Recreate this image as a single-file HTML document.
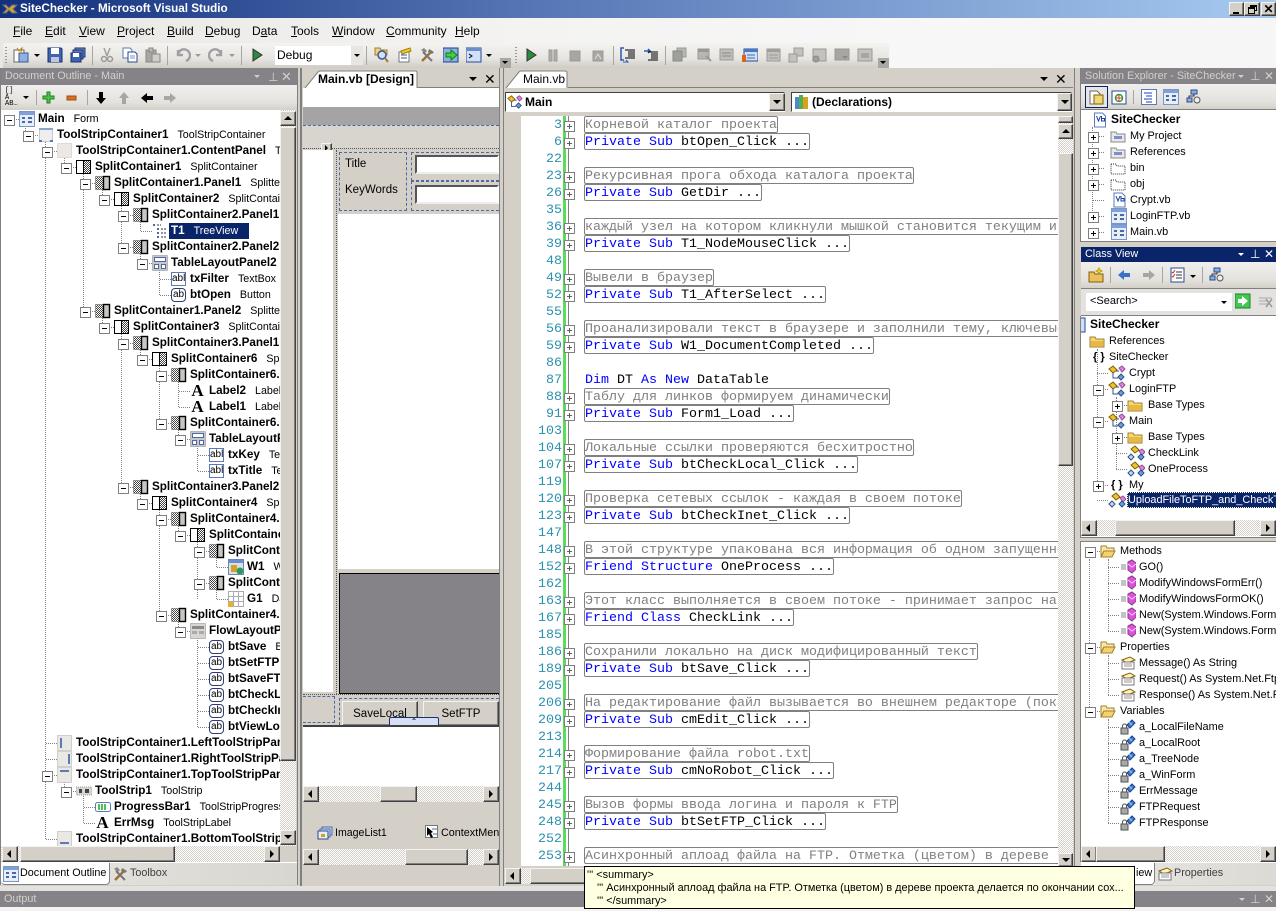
<!DOCTYPE html>
<html><head><meta charset="utf-8"><title>SiteChecker - Microsoft Visual Studio</title>
<style>
html,body{margin:0;padding:0}
body{width:1276px;height:911px;overflow:hidden;position:relative;background:#d4d0c8;font:11px "Liberation Sans",sans-serif;color:#000}
div,span,svg{box-sizing:border-box}
.a{position:absolute;white-space:nowrap}
.b{position:absolute;background:#d4d0c8;border:1px solid;border-color:#f4f3ef #404040 #404040 #f4f3ef;box-shadow:inset -1px -1px #808080}
.d{position:absolute;background:repeating-conic-gradient(#d4d0c8 0 25%,#fff 0 50%) 0 0/2px 2px}
.ti{position:absolute;background:#858387;color:#d4d0c8;font-size:10.8px;line-height:16px;padding-left:4px;white-space:nowrap;overflow:hidden}
.w{position:absolute;background:#fff;overflow:hidden}
.ul,.ur,.uu,.ud{position:absolute;width:0;height:0;border:4px solid transparent}
.ul{border-right-color:#000;border-left-width:0}
.ur{border-left-color:#000;border-right-width:0}
.uu{border-bottom-color:#000;border-top-width:0}
.ud{border-top-color:#000;border-bottom-width:0}
.m{position:absolute;font-size:12px;line-height:14px;top:24px;color:#000}
.m u{text-decoration:underline}
.ic{position:absolute;width:16px;height:16px}
.sep{position:absolute;width:1px;background:#a8a6a0;top:46px;height:19px}
.t{position:relative;height:16px;line-height:16px;white-space:nowrap;font-size:11.7px}
.t b{position:absolute;left:37px;top:0;font-weight:bold}
.t em{font-style:normal;font-weight:normal;font-size:10.7px;margin-left:9px}
.t u,.s u{position:absolute;left:3px;top:4px;width:9px;height:9px;border:1px solid #808080;background:#fff;z-index:2}
u.mi{background:linear-gradient(#000,#000) center/5px 1px no-repeat #fff}
u.pl{background:linear-gradient(#000,#000) center/5px 1px no-repeat,linear-gradient(#000,#000) center/1px 5px no-repeat,#fff}
.t s,.s s{position:absolute;left:7px;top:8px;width:11px;border-top:1px dotted #808080}
.t svg,.s svg{position:absolute;left:18px;top:0;width:16px;height:16px}
.v{position:absolute;border-left:1px dotted #808080;width:1px}
.ab,.abl{position:absolute;left:18px;top:1px;width:15px;height:14px;border:1px solid #5a7ab8;background:#fff;font:10px/12px "Liberation Sans",sans-serif;text-align:center;color:#000}
.ab{border-radius:4px;border-color:#2a3f70}
.A{position:absolute;left:18px;top:-1px;width:15px;font:bold 17px/17px "Liberation Serif",serif;text-align:center}
.l{position:relative;height:17px;font:13.333px/17px "Liberation Mono",monospace;white-space:pre}
.l i{position:absolute;right:496px;top:1px;font-style:normal;color:#2b91af}
.l u{position:absolute;left:60px;top:5px;width:9px;height:9px;border:1px solid #808080;z-index:2;background:linear-gradient(#606060,#606060) center/5px 1px no-repeat,linear-gradient(#606060,#606060) center/1px 5px no-repeat,#fff}
.l span{position:absolute;left:80px;top:0;height:17px;line-height:17px;border:1px solid #808080;border-radius:2px}
.l span.c{color:#808080}
.l .f{position:absolute;left:81px;top:1px}
.l q{quotes:none;color:#00f}
.s{position:absolute;height:16px;margin-top:1px;line-height:16px;white-space:nowrap;font-size:10.9px}
.s svg{left:0}
.s>span{position:absolute}
.s u{top:4px}
.bb{font-size:12px;font-weight:bold;line-height:16px}
.tab{font-size:10.8px}
</style></head>
<body>
<svg width="0" height="0" style="position:absolute"><defs>
<pattern id="dt" width="2" height="2" patternUnits="userSpaceOnUse"><rect width="2" height="2" fill="#fff"/><rect width="1" height="1" fill="#444"/><rect x="1" y="1" width="1" height="1" fill="#444"/></pattern>
<symbol id="sc" viewBox="0 0 16 16"><rect x=".5" y="1.5" width="14" height="13" fill="#fff" stroke="#000"/><rect x="8" y="2" width="6" height="12" fill="url(#dt)"/><path d="M7.5 1v14" stroke="#000"/></symbol>
<symbol id="sp" viewBox="0 0 16 16"><rect x=".5" y="1.5" width="14" height="13" fill="url(#dt)" stroke="#555" stroke-dasharray="1 1"/><rect x="8.5" y="1.5" width="6" height="13" fill="#c8c6c0" stroke="#000" stroke-width="1.4"/></symbol>
<symbol id="fm" viewBox="0 0 16 16"><rect x=".5" y=".5" width="15" height="15" fill="#e8eef8" stroke="#7a96c8"/><rect x="1" y="1" width="14" height="3" fill="#7fa0d8"/><path d="M3 7h3M9 7h4M3 11h3M9 11h4" stroke="#4a6aa5" stroke-width="2"/></symbol>
<symbol id="ts" viewBox="0 0 16 16"><rect x="1.5" y="1.5" width="13" height="13" fill="#eee" stroke="#999" stroke-dasharray="1 1"/><path d="M1 1h14v2H1z" fill="#8aa4d0"/><path d="M1 13h3v2H1zM12 13h3v2h-3z" fill="#5a7ab8"/></symbol>
<symbol id="cp" viewBox="0 0 16 16"><rect x=".5" y=".5" width="14" height="14" fill="#ece9e4" stroke="#c4c2bc" stroke-dasharray="1 1"/></symbol>
<symbol id="tv" viewBox="0 0 16 16"><path d="M1 1h2v2H1zM5 5h2v2H5zM5 9h2v2H5zM5 13h2v2H5z" fill="#4a6aa5"/><path d="M5 2h4M9 6h6M9 10h6M9 14h6" stroke="#333" stroke-dasharray="2 1"/></symbol>
<symbol id="tl" viewBox="0 0 16 16"><rect x=".5" y=".5" width="15" height="15" fill="#c8c6c8" stroke="#888" stroke-dasharray="1 1"/><rect x="2.5" y="2.5" width="11" height="4" fill="#fff" stroke="#4a6aa5"/><rect x="2.5" y="9.5" width="4" height="4" fill="#fff" stroke="#4a6aa5"/><rect x="9.5" y="9.5" width="4" height="4" fill="#fff" stroke="#4a6aa5"/></symbol>
<symbol id="fl" viewBox="0 0 16 16"><rect x=".5" y=".5" width="15" height="15" fill="#d8d6d0" stroke="#888" stroke-dasharray="1 1"/><rect x="2" y="3" width="12" height="3" fill="#8a8a8a"/><rect x="2" y="8" width="5" height="3" fill="#aaa"/><rect x="9" y="8" width="5" height="3" fill="#aaa"/></symbol>
<symbol id="wb" viewBox="0 0 16 16"><rect x=".5" y=".5" width="15" height="15" fill="#d8e0f0" stroke="#6a86b8"/><rect x="1" y="1" width="14" height="3" fill="#6a8ecc"/><rect x="3" y="6" width="6" height="7" fill="#d8a020"/><circle cx="12" cy="12" r="3.5" fill="#2a9a5a"/></symbol>
<symbol id="gd" viewBox="0 0 16 16"><rect x=".5" y=".5" width="15" height="15" fill="#fff" stroke="#aaa"/><path d="M.5 5.5h15M.5 10.5h15M5.5 .5v15M10.5 .5v15" stroke="#aab"/><rect x="0" y="11" width="5" height="5" fill="#e8b030"/></symbol>
<symbol id="lp" viewBox="0 0 16 16"><rect x=".5" y=".5" width="14" height="15" fill="#eae8e2" stroke="#aaa" stroke-dasharray="1 1"/><rect x="3" y="3" width="2" height="10" fill="#5a7ab8"/></symbol>
<symbol id="rp" viewBox="0 0 16 16"><rect x=".5" y=".5" width="14" height="15" fill="#eae8e2" stroke="#aaa" stroke-dasharray="1 1"/><rect x="11" y="3" width="2" height="10" fill="#5a7ab8"/></symbol>
<symbol id="tp" viewBox="0 0 16 16"><rect x=".5" y=".5" width="14" height="15" fill="#eae8e2" stroke="#aaa" stroke-dasharray="1 1"/><rect x="3" y="3" width="9" height="2" fill="#5a7ab8"/></symbol>
<symbol id="bp" viewBox="0 0 16 16"><rect x=".5" y=".5" width="14" height="15" fill="#eae8e2" stroke="#aaa" stroke-dasharray="1 1"/><rect x="3" y="11" width="9" height="2" fill="#5a7ab8"/></symbol>
<symbol id="ts1" viewBox="0 0 16 16"><rect x="0" y="4" width="16" height="8" fill="#d8d6d0" stroke="#999" stroke-dasharray="1 1"/><path d="M3 6h3v4H3zM9 6h4v4H9z" fill="#444"/></symbol>
<symbol id="pb" viewBox="0 0 16 16"><rect x=".5" y="3.5" width="15" height="9" rx="2" fill="#fff" stroke="#5a7ab8"/><path d="M3 5h2v6H3zM6 5h2v6H6zM9 5h2v6H9z" fill="#50c050"/></symbol>
<symbol id="fd" viewBox="0 0 16 16"><path d="M1 4h5l1 2h8v8H1z" fill="#f6d878" stroke="#a08030"/><rect x="2" y="8" width="12" height="5" fill="#e8b840"/></symbol>
<symbol id="fo" viewBox="0 0 16 16"><path d="M1 3h5l1 2h7v3H4l-3 6z" fill="#fbe8a8" stroke="#a08030"/><path d="M4 8h11l-3 6H1z" fill="#f6d070" stroke="#a08030"/></symbol>
<symbol id="fg" viewBox="0 0 16 16"><path d="M1 4h5l1 2h8v8H1z" fill="#e8e8e8" stroke="#888"/><path d="M4 8h8v3H4z" fill="#7a90c8"/></symbol>
<symbol id="fw" viewBox="0 0 16 16"><path d="M1 4h5l1 2h8v8H1z" fill="#fff" stroke="#333" stroke-dasharray="1 1"/></symbol>
<symbol id="cl" viewBox="0 0 18 16"><path d="M1 4l4-3 4 4-4 3z" fill="#f0c030" stroke="#806000"/><path d="M11 3l3-2 3 3-3 3z" fill="#e080e0" stroke="#905090"/><path d="M10 12l3-3 3 3-3 3z" fill="#60a0e0" stroke="#305080"/><path d="M5 8v5h5M8 6h3" stroke="#3050a0" fill="none"/></symbol>
<symbol id="cp2" viewBox="0 0 18 16"><path d="M4 4l4-3 4 4-4 3z" fill="#f0c030" stroke="#806000"/><path d="M12 6l3-2 3 3-3 3z" fill="#e080e0" stroke="#905090"/><path d="M1 12l3-3 3 3-3 3z" fill="#c0d8f4" stroke="#305080"/><path d="M11 12l3-3 3 3-3 3z" fill="#60a0e0" stroke="#305080"/></symbol>
<symbol id="me" viewBox="0 0 16 16"><path d="M1 6h5M1 8h5M1 10h5" stroke="#888"/><path d="M8 3l4-2 4 3v6l-4 4-4-3z" fill="#e050e0" stroke="#804080"/><path d="M8 5l4 3 4-3" stroke="#fbd0fb" fill="none"/></symbol>
<symbol id="pr" viewBox="0 0 16 16"><path d="M2 5l8-3 5 3-8 3z" fill="#fff0c0" stroke="#806000"/><rect x="2" y="7" width="12" height="7" fill="#fff" stroke="#777"/><path d="M4 9h8M4 11h8" stroke="#999"/></symbol>
<symbol id="vr" viewBox="0 0 16 16"><path d="M7 6l5-5 3 3-5 5z" fill="#3a80d8" stroke="#1a4080"/><path d="M9 3l3 3" stroke="#a8d0f8"/><rect x="1" y="9" width="7" height="6" fill="#a8a8a8" stroke="#555"/><path d="M2.5 9V7a2 2 0 014 0v2" fill="none" stroke="#555"/></symbol>
<symbol id="vb" viewBox="0 0 16 16"><path d="M3 1h8l3 3v11H3z" fill="#fff" stroke="#5a7ab8"/><path d="M5 4l2 5 2-5M10 4v5h3V6.5h-3" stroke="#1a3fa0" fill="none"/></symbol>
</defs></svg>

<!-- title bar -->
<div class="a" style="left:0;top:0;width:1276px;height:18px;background:linear-gradient(90deg,#12307c,#5373b3 40%,#a6caf0 100%)"></div>
<svg class="a" style="left:2px;top:2px" width="16" height="14"><path d="M1 3l4 4-4 4h3l3-3 3 3h5l-4-4 4-4h-5l-3 3-3-3z" fill="#e0a030" stroke="#5a7080"/></svg>
<div class="a" style="left:20px;top:0;line-height:18px;font-size:11.7px;font-weight:bold;color:#fff">SiteChecker - Microsoft Visual Studio</div>
<div class="b" style="left:1229px;top:2px;width:15px;height:14px"><div class="a" style="left:3px;top:9px;width:6px;height:2px;background:#000"></div></div>
<div class="b" style="left:1244px;top:2px;width:16px;height:14px"><div class="a" style="left:5px;top:2px;width:7px;height:6px;border:1px solid #000;border-top-width:2px"></div><div class="a" style="left:3px;top:4px;width:7px;height:7px;border:1px solid #000;border-top-width:2px;background:#d4d0c8"></div></div>
<div class="b" style="left:1261px;top:2px;width:15px;height:14px;font:bold 12px/12px 'Liberation Sans',sans-serif;text-align:center">✕</div>

<!-- menu -->
<div class="a" style="left:0;top:18px;width:1276px;height:50px;background:linear-gradient(90deg,#e8e7e4,#f3f2f0 35%,#f7f7f7 70%,#f6f6f6)"></div>
<div class="m" style="left:13px"><u>F</u>ile</div>
<div class="m" style="left:45px"><u>E</u>dit</div>
<div class="m" style="left:79px"><u>V</u>iew</div>
<div class="m" style="left:117px"><u>P</u>roject</div>
<div class="m" style="left:167px"><u>B</u>uild</div>
<div class="m" style="left:205px"><u>D</u>ebug</div>
<div class="m" style="left:252px">D<u>a</u>ta</div>
<div class="m" style="left:291px"><u>T</u>ools</div>
<div class="m" style="left:332px"><u>W</u>indow</div>
<div class="m" style="left:386px"><u>C</u>ommunity</div>
<div class="m" style="left:455px"><u>H</u>elp</div>

<!-- toolbars -->
<div class="a" style="left:3px;top:43px;width:508px;height:25px;border-radius:3px 3px 0 0;background:linear-gradient(#f4f3f1,#e8e6e2 60%,#cfccc5)"></div>
<div class="a" style="left:511px;top:43px;width:378px;height:25px;border-radius:3px 3px 0 0;background:linear-gradient(#f4f3f1,#e8e6e2 60%,#cfccc5)"></div>
<div class="a" style="left:5px;top:47px;width:2px;height:17px;background:repeating-linear-gradient(#999 0 1px,transparent 1px 3px)"></div>
<div class="a" style="left:515px;top:47px;width:2px;height:17px;background:repeating-linear-gradient(#999 0 1px,transparent 1px 3px)"></div>
<svg class="ic" style="left:13px;top:47px"><path d="M1 3h10v12H1z" fill="#fff" stroke="#666"/><path d="M4 1l2 3 3-3-1 4" fill="#f0c830" stroke="#c08000"/><rect x="6" y="6" width="9" height="9" fill="#8fb0e0" stroke="#3a5a90"/></svg>
<div class="ud" style="left:34px;top:54px;border-width:3px;border-bottom-width:0"></div>
<svg class="ic" style="left:47px;top:47px"><path d="M1 1h13l1 1v13H1z" fill="#3e64b0" stroke="#1a3070"/><rect x="4" y="1" width="8" height="6" fill="#fff"/><rect x="4" y="10" width="8" height="5" fill="#c0c8d8"/></svg>
<svg class="ic" style="left:70px;top:47px"><path d="M5 1h10v9H5z" fill="#7a90c8" stroke="#1a3070"/><path d="M3 3h10v9H3z" fill="#5a78c0" stroke="#1a3070"/><path d="M1 6h10v9H1z" fill="#3e64b0" stroke="#1a3070"/><rect x="3" y="6" width="6" height="4" fill="#fff"/></svg>
<div class="sep" style="left:92px"></div>
<svg class="ic" style="left:99px;top:47px"><path d="M5 1l3 8M11 1L8 9" stroke="#a0a0a0" stroke-width="1.5"/><circle cx="5" cy="12" r="2.5" fill="none" stroke="#999" stroke-width="1.5"/><circle cx="11" cy="12" r="2.5" fill="none" stroke="#999" stroke-width="1.5"/></svg>
<svg class="ic" style="left:122px;top:47px"><path d="M1 1h7l2 2v8H1z" fill="#fff" stroke="#5a7ab8"/><path d="M6 5h7l2 2v8H6z" fill="#fff" stroke="#2a4a90"/><path d="M8 9h5M8 11h5" stroke="#7a96c8"/></svg>
<svg class="ic" style="left:145px;top:47px"><rect x="1" y="3" width="10" height="12" fill="#a8a6a0" stroke="#888"/><rect x="4" y="1" width="4" height="4" fill="#bbb" stroke="#888"/><rect x="7" y="7" width="8" height="8" fill="#d0cec8" stroke="#888"/></svg>
<div class="sep" style="left:167px"></div>
<svg class="ic" style="left:175px;top:47px"><path d="M3 3v5h5M3 8a6 6 0 118 6" fill="none" stroke="#a0a0a0" stroke-width="2.4"/></svg>
<div class="ud" style="left:195px;top:54px;border-width:3px;border-bottom-width:0;border-top-color:#999"></div>
<svg class="ic" style="left:208px;top:47px"><path d="M13 3v5H8M13 8a6 6 0 10-8 6" fill="none" stroke="#a0a0a0" stroke-width="2.4"/></svg>
<div class="ud" style="left:229px;top:54px;border-width:3px;border-bottom-width:0;border-top-color:#999"></div>
<div class="sep" style="left:241px"></div>
<svg class="ic" style="left:250px;top:47px"><path d="M3 2l9 6-9 6z" fill="#2c8a3c" stroke="#333"/></svg>
<div class="a" style="left:275px;top:46px;width:88px;height:19px;background:#fff;font-size:12px;line-height:19px;padding-left:2px">Debug</div>
<div class="a" style="left:351px;top:46px;width:12px;height:19px;background:#e8e6e2"></div>
<div class="ud" style="left:354px;top:54px;border-width:3px;border-bottom-width:0"></div>
<div class="sep" style="left:366px"></div>
<svg class="ic" style="left:373px;top:47px"><path d="M2 1h5l1 2h6v5H2z" fill="#f0d080" stroke="#a08030"/><circle cx="9" cy="8" r="4" fill="#cfe0f8" stroke="#3a5a90" stroke-width="1.5"/><path d="M12 11l3 4" stroke="#a08030" stroke-width="2"/></svg>
<svg class="ic" style="left:396px;top:47px"><path d="M3 5h10v10H3z" fill="#fff" stroke="#777"/><path d="M5 8h6M5 11h6" stroke="#3a5a90"/><path d="M5 4l9-3 1 3-9 3z" fill="#f0c830" stroke="#a08000"/></svg>
<svg class="ic" style="left:419px;top:47px"><path d="M3 14L13 4" stroke="#a07030" stroke-width="2.5"/><path d="M2 3l3-2 3 3-2 2z" fill="#888"/><path d="M13 14L4 5" stroke="#777" stroke-width="2"/><path d="M10 2l5 3-2 2-4-2z" fill="#777"/></svg>
<svg class="ic" style="left:443px;top:47px"><rect x="0" y="1" width="15" height="14" fill="#8ab0e0" stroke="#1a3f90"/><path d="M3 6h5V3l6 5-6 5v-3H3z" fill="#40d040" stroke="#108010"/></svg>
<svg class="ic" style="left:466px;top:47px"><rect x="0" y="1" width="15" height="14" fill="#cfe0f8" stroke="#2a4a90"/><rect x="0" y="1" width="15" height="3" fill="#6a8ecc"/><path d="M3 7l3 2-3 2" fill="none" stroke="#000"/></svg>
<div class="ud" style="left:486px;top:54px;border-width:3px;border-bottom-width:0"></div>
<div class="a" style="left:500px;top:58px;width:11px;height:10px;background:#aaa8a2"></div>
<div class="ud" style="left:502px;top:61px;border-width:3px;border-bottom-width:0"></div>
<svg class="ic" style="left:523px;top:47px"><path d="M4 2l9 6-9 6z" fill="#2c8a3c" stroke="#333"/></svg>
<svg class="ic" style="left:545px;top:47px"><path d="M4 3h3v11H4zM9 3h3v11H9z" fill="#b0aea8" stroke="#999"/></svg>
<svg class="ic" style="left:567px;top:47px"><rect x="3" y="4" width="10" height="10" fill="#a8a6a0" stroke="#999"/></svg>
<svg class="ic" style="left:590px;top:47px"><rect x="3" y="4" width="10" height="10" fill="#a8a6a0" stroke="#999"/><path d="M5 12l3-5 3 5" fill="none" stroke="#ddd"/></svg>
<div class="sep" style="left:613px"></div>
<svg class="ic" style="left:620px;top:47px"><path d="M4 1H1v12h3" fill="none" stroke="#2a5ab0" stroke-width="1.5"/><path d="M5 3h10M8 5h7M8 7h7M8 9h7M5 11h10" stroke="#000"/><path d="M3 15h5l-2-2" fill="none" stroke="#2a5ab0"/></svg>
<svg class="ic" style="left:643px;top:47px"><path d="M1 4h6l-2-2M5 6L7 4" fill="none" stroke="#2a5ab0" stroke-width="1.5"/><path d="M5 5h10M8 7h7M8 9h7M8 11h7M5 13h10" stroke="#000"/></svg>
<div class="sep" style="left:665px"></div>
<svg class="ic" style="left:672px;top:47px"><rect x="5" y="1" width="9" height="9" fill="#b8b6b0" stroke="#999"/><rect x="1" y="4" width="9" height="10" fill="#a0a09a" stroke="#888"/></svg>
<svg class="ic" style="left:696px;top:47px"><rect x="2" y="2" width="11" height="10" fill="#b8b6b0" stroke="#999"/><rect x="2" y="2" width="11" height="3" fill="#9a9a94"/><path d="M10 9l5 5" stroke="#999" stroke-width="2"/></svg>
<svg class="ic" style="left:718px;top:47px"><rect x="2" y="2" width="13" height="11" fill="#c0beb8" stroke="#999"/><path d="M4 6h9M4 9h9" stroke="#888"/></svg>
<svg class="ic" style="left:742px;top:47px"><rect x="2" y="2" width="14" height="12" fill="#cfe0f8" stroke="#2a4a90"/><rect x="2" y="2" width="14" height="3" fill="#4a78c8"/><path d="M5 8h8M5 11h8" stroke="#4a6aa5"/><rect x="0" y="8" width="4" height="7" fill="#e06020"/></svg>
<svg class="ic" style="left:765px;top:47px"><rect x="2" y="2" width="13" height="12" fill="#c4c2bc" stroke="#999"/><rect x="2" y="2" width="13" height="3" fill="#a0a09a"/><path d="M4 8h9M4 11h9" stroke="#999"/></svg>
<svg class="ic" style="left:788px;top:47px"><rect x="6" y="1" width="9" height="8" fill="#c4c2bc" stroke="#999"/><rect x="1" y="7" width="8" height="8" fill="#c4c2bc" stroke="#999"/></svg>
<svg class="ic" style="left:811px;top:47px"><rect x="2" y="2" width="13" height="12" fill="#c4c2bc" stroke="#999"/><circle cx="5" cy="12" r="3" fill="#a0a09a" stroke="#888"/></svg>
<svg class="ic" style="left:834px;top:47px"><rect x="1" y="2" width="14" height="11" fill="#a8a6a0" stroke="#999"/><path d="M8 9l3 3 3-3z" fill="#888"/></svg>
<svg class="ic" style="left:857px;top:47px"><rect x="1" y="2" width="14" height="12" fill="#c4c2bc" stroke="#999"/><rect x="4" y="6" width="8" height="5" fill="#a8a6a0"/></svg>
<div class="a" style="left:878px;top:58px;width:11px;height:10px;background:#aaa8a2"></div>
<div class="ud" style="left:880px;top:61px;border-width:3px;border-bottom-width:0"></div>

<!-- LEFT: Document Outline -->
<div class="a" style="left:0;top:68px;width:298px;height:817px;border-left:1px solid #808080;border-right:1px solid #808080"></div>
<div class="ti" style="left:1px;top:68px;width:296px;height:17px">Document Outline - Main</div>
<div class="ud" style="left:254px;top:75px;border-width:3px;border-bottom-width:0;border-top-color:#d4d0c8"></div>
<div class="a" style="left:268px;top:69px;color:#d4d0c8;font-size:12px;line-height:16px">⊥</div>
<div class="a" style="left:281px;top:69px;color:#d4d0c8;font-size:13px;line-height:16px">✕</div>
<div class="a" style="left:1px;top:85px;width:296px;height:25px;background:linear-gradient(#f0efed,#e4e2de 70%,#d4d0c8)"></div>
<div class="a" style="left:5px;top:88px;font:7px/6.5px 'Liberation Mono',monospace;white-space:pre">[]
A
AB…</div>
<div class="ud" style="left:23px;top:96px;border-width:3px;border-bottom-width:0"></div>
<div class="sep" style="left:36px;top:90px;height:15px"></div>
<svg class="ic" style="left:41px;top:90px"><path d="M6 2h3v4h4v3H9v4H6V9H2V6h4z" fill="#50c050" stroke="#208020"/></svg>
<svg class="ic" style="left:64px;top:90px"><rect x="3" y="6" width="9" height="4" fill="#d87020" stroke="#a05010"/></svg>
<div class="sep" style="left:87px;top:90px;height:15px"></div>
<svg class="ic" style="left:93px;top:90px"><path d="M6 2h4v6h3l-5 6-5-6h3z" fill="#000"/></svg>
<svg class="ic" style="left:116px;top:90px"><path d="M6 14h4V8h3L8 2 3 8h3z" fill="#a8a6a0"/></svg>
<svg class="ic" style="left:139px;top:90px"><path d="M14 6v4H8v3L2 8l6-5v3z" fill="#000"/></svg>
<svg class="ic" style="left:162px;top:90px"><path d="M2 6v4h6v3l6-5-6-5v3z" fill="#a8a6a0"/></svg>

<div class="w" style="left:1px;top:110px;width:279px;height:736px">
<div class="a" style="left:0;top:1px;width:279px;height:736px">
<div class="v" style="left:24px;top:8px;height:16px"></div>
<div class="v" style="left:44px;top:24px;height:704px"></div>
<div class="v" style="left:63px;top:40px;height:16px"></div><div class="v" style="left:63px;top:664px;height:16px"></div>
<div class="v" style="left:82px;top:56px;height:144px"></div><div class="v" style="left:82px;top:680px;height:32px"></div>
<div class="v" style="left:101px;top:72px;height:16px"></div><div class="v" style="left:101px;top:200px;height:16px"></div>
<div class="v" style="left:120px;top:88px;height:48px"></div><div class="v" style="left:120px;top:216px;height:160px"></div>
<div class="v" style="left:139px;top:104px;height:16px"></div><div class="v" style="left:139px;top:136px;height:16px"></div><div class="v" style="left:139px;top:232px;height:16px"></div><div class="v" style="left:139px;top:376px;height:16px"></div>
<div class="v" style="left:158px;top:152px;height:32px"></div><div class="v" style="left:158px;top:248px;height:64px"></div><div class="v" style="left:158px;top:392px;height:112px"></div>
<div class="v" style="left:177px;top:264px;height:32px"></div><div class="v" style="left:177px;top:312px;height:16px"></div><div class="v" style="left:177px;top:408px;height:16px"></div><div class="v" style="left:177px;top:504px;height:16px"></div>
<div class="v" style="left:196px;top:328px;height:32px"></div><div class="v" style="left:196px;top:424px;height:64px"></div><div class="v" style="left:196px;top:520px;height:96px"></div>
<div class="v" style="left:215px;top:440px;height:16px"></div><div class="v" style="left:215px;top:472px;height:16px"></div>
</div>
<div class="a" style="left:0;top:1px;width:279px">
<div class="t" style="margin-left:0"><u class="mi"></u><s></s><svg><use href="#fm"/></svg><b>Main<em>Form</em></b></div>
<div class="t" style="margin-left:19px"><u class="mi"></u><s></s><svg><use href="#ts"/></svg><b>ToolStripContainer1<em>ToolStripContainer</em></b></div>
<div class="t" style="margin-left:38px"><u class="mi"></u><s></s><svg><use href="#cp"/></svg><b>ToolStripContainer1.ContentPanel<em>ToolStripContentPanel</em></b></div>
<div class="t" style="margin-left:57px"><u class="mi"></u><s></s><svg><use href="#sc"/></svg><b>SplitContainer1<em>SplitContainer</em></b></div>
<div class="t" style="margin-left:76px"><u class="mi"></u><s></s><svg><use href="#sp"/></svg><b>SplitContainer1.Panel1<em>SplitterPanel</em></b></div>
<div class="t" style="margin-left:95px"><u class="mi"></u><s></s><svg><use href="#sc"/></svg><b>SplitContainer2<em>SplitContainer</em></b></div>
<div class="t" style="margin-left:114px"><u class="mi"></u><s></s><svg><use href="#sp"/></svg><b>SplitContainer2.Panel1</b></div>
<div class="t" style="margin-left:133px"><s></s><svg><use href="#tv"/></svg><div class="a" style="left:35px;top:0;width:80px;height:16px;background:#0a246a"></div><b style="color:#fff">T1<em>TreeView</em></b></div>
<div class="t" style="margin-left:114px"><u class="mi"></u><s></s><svg><use href="#sp"/></svg><b>SplitContainer2.Panel2</b></div>
<div class="t" style="margin-left:133px"><u class="mi"></u><s></s><svg><use href="#tl"/></svg><b>TableLayoutPanel2</b></div>
<div class="t" style="margin-left:152px"><s></s><span class="abl">abl</span><b>txFilter<em>TextBox</em></b></div>
<div class="t" style="margin-left:152px"><s></s><span class="ab">ab</span><b>btOpen<em>Button</em></b></div>
<div class="t" style="margin-left:76px"><u class="mi"></u><s></s><svg><use href="#sp"/></svg><b>SplitContainer1.Panel2<em>SplitterPanel</em></b></div>
<div class="t" style="margin-left:95px"><u class="mi"></u><s></s><svg><use href="#sc"/></svg><b>SplitContainer3<em>SplitContainer</em></b></div>
<div class="t" style="margin-left:114px"><u class="mi"></u><s></s><svg><use href="#sp"/></svg><b>SplitContainer3.Panel1</b></div>
<div class="t" style="margin-left:133px"><u class="mi"></u><s></s><svg><use href="#sc"/></svg><b>SplitContainer6<em>SplitContainer</em></b></div>
<div class="t" style="margin-left:152px"><u class="mi"></u><s></s><svg><use href="#sp"/></svg><b>SplitContainer6.Panel1</b></div>
<div class="t" style="margin-left:171px"><s></s><span class="A">A</span><b>Label2<em>Label</em></b></div>
<div class="t" style="margin-left:171px"><s></s><span class="A">A</span><b>Label1<em>Label</em></b></div>
<div class="t" style="margin-left:152px"><u class="mi"></u><s></s><svg><use href="#sp"/></svg><b>SplitContainer6.Panel2</b></div>
<div class="t" style="margin-left:171px"><u class="mi"></u><s></s><svg><use href="#tl"/></svg><b>TableLayoutPanel1</b></div>
<div class="t" style="margin-left:190px"><s></s><span class="abl">abl</span><b>txKey<em>TextBox</em></b></div>
<div class="t" style="margin-left:190px"><s></s><span class="abl">abl</span><b>txTitle<em>TextBox</em></b></div>
<div class="t" style="margin-left:114px"><u class="mi"></u><s></s><svg><use href="#sp"/></svg><b>SplitContainer3.Panel2</b></div>
<div class="t" style="margin-left:133px"><u class="mi"></u><s></s><svg><use href="#sc"/></svg><b>SplitContainer4<em>SplitContainer</em></b></div>
<div class="t" style="margin-left:152px"><u class="mi"></u><s></s><svg><use href="#sp"/></svg><b>SplitContainer4.Panel1</b></div>
<div class="t" style="margin-left:171px"><u class="mi"></u><s></s><svg><use href="#sc"/></svg><b>SplitContainer5</b></div>
<div class="t" style="margin-left:190px"><u class="mi"></u><s></s><svg><use href="#sp"/></svg><b>SplitContainer5.Panel1</b></div>
<div class="t" style="margin-left:209px"><s></s><svg><use href="#wb"/></svg><b>W1<em>WebBrowser</em></b></div>
<div class="t" style="margin-left:190px"><u class="mi"></u><s></s><svg><use href="#sp"/></svg><b>SplitContainer5.Panel2</b></div>
<div class="t" style="margin-left:209px"><s></s><svg><use href="#gd"/></svg><b>G1<em>DataGridView</em></b></div>
<div class="t" style="margin-left:152px"><u class="mi"></u><s></s><svg><use href="#sp"/></svg><b>SplitContainer4.Panel2</b></div>
<div class="t" style="margin-left:171px"><u class="mi"></u><s></s><svg><use href="#fl"/></svg><b>FlowLayoutPanel1</b></div>
<div class="t" style="margin-left:190px"><s></s><span class="ab">ab</span><b>btSave<em>Button</em></b></div>
<div class="t" style="margin-left:190px"><s></s><span class="ab">ab</span><b>btSetFTP<em>Button</em></b></div>
<div class="t" style="margin-left:190px"><s></s><span class="ab">ab</span><b>btSaveFTP<em>Button</em></b></div>
<div class="t" style="margin-left:190px"><s></s><span class="ab">ab</span><b>btCheckLocal</b></div>
<div class="t" style="margin-left:190px"><s></s><span class="ab">ab</span><b>btCheckInet</b></div>
<div class="t" style="margin-left:190px"><s></s><span class="ab">ab</span><b>btViewLocal</b></div>
<div class="t" style="margin-left:38px"><s></s><svg><use href="#lp"/></svg><b>ToolStripContainer1.LeftToolStripPanel</b></div>
<div class="t" style="margin-left:38px"><s></s><svg><use href="#rp"/></svg><b>ToolStripContainer1.RightToolStripPanel</b></div>
<div class="t" style="margin-left:38px"><u class="mi"></u><s></s><svg><use href="#tp"/></svg><b>ToolStripContainer1.TopToolStripPanel</b></div>
<div class="t" style="margin-left:57px"><u class="mi"></u><s></s><svg><use href="#ts1"/></svg><b>ToolStrip1<em>ToolStrip</em></b></div>
<div class="t" style="margin-left:76px"><s></s><svg><use href="#pb"/></svg><b>ProgressBar1<em>ToolStripProgressBar</em></b></div>
<div class="t" style="margin-left:76px"><s></s><span class="A">A</span><b>ErrMsg<em>ToolStripLabel</em></b></div>
<div class="t" style="margin-left:38px"><s></s><svg><use href="#bp"/></svg><b>ToolStripContainer1.BottomToolStripPanel</b></div>
</div></div>

<div class="d" style="left:280px;top:110px;width:16px;height:736px"></div>
<div class="b" style="left:280px;top:111px;width:16px;height:15px"><div class="uu" style="left:3px;top:4px"></div></div>
<div class="b" style="left:280px;top:127px;width:16px;height:634px"></div>
<div class="b" style="left:280px;top:830px;width:16px;height:15px"><div class="ud" style="left:3px;top:4px"></div></div>
<div class="d" style="left:1px;top:846px;width:279px;height:16px"></div>
<div class="b" style="left:2px;top:846px;width:16px;height:16px"><div class="ul" style="left:4px;top:3px"></div></div>
<div class="b" style="left:20px;top:846px;width:155px;height:16px"></div>
<div class="b" style="left:264px;top:846px;width:16px;height:16px"><div class="ur" style="left:5px;top:3px"></div></div>
<div class="a" style="left:1px;top:862px;width:296px;height:1px;background:#fff"></div>
<div class="a" style="left:1px;top:863px;width:296px;height:22px;background:linear-gradient(90deg,#e8e6e2,#d8d6d0)"></div>
<div class="a tab" style="left:1px;top:863px;width:109px;height:22px;background:#fff;border-right:1px solid #808080;border-bottom:1px solid #808080;border-radius:0 0 4px 4px;line-height:21px;padding-left:19px">Document Outline</div>
<svg class="ic" style="left:3px;top:866px"><use href="#fm"/></svg>
<svg class="ic" style="left:112px;top:866px"><path d="M3 14L13 4" stroke="#a07030" stroke-width="2.5"/><path d="M2 3l3-2 3 3-2 2z" fill="#888"/><path d="M13 14L4 5" stroke="#777" stroke-width="2"/><path d="M10 2l5 3-2 2-4-2z" fill="#777"/></svg>
<div class="a tab" style="left:130px;top:863px;line-height:21px;color:#404040">Toolbox</div>

<!-- DESIGN panel -->
<div class="a" style="left:300px;top:68px;width:200px;height:818px;border-left:2px solid #808080;border-right:1px solid #808080"></div>
<svg class="a" style="left:304px;top:70px" width="116" height="19"><path d="M1 18L14 2q1-1 2-1h95q2 0 2 2v15" fill="#fff" stroke="#808080"/></svg>
<div class="a" style="left:318px;top:71px;font-size:12px;font-weight:bold;line-height:16px">Main.vb [Design]</div>
<div class="a" style="left:417px;top:87px;width:82px;height:1px;background:#808080"></div>
<div class="ud" style="left:469px;top:77px;border-width:4px;border-bottom-width:0"></div>
<div class="a" style="left:484px;top:71px;font-size:14px;line-height:16px">✕</div>
<div class="a" style="left:303px;top:88px;width:196px;height:19px;background:#fff"></div>
<div class="a" style="left:303px;top:107px;width:196px;height:18px;background:#a5a3a3"></div>
<div class="a" style="left:303px;top:125px;width:196px;height:23px;background:#d8d5cf;border-top:1px dashed #4a6aa5"></div>
<div class="a" style="left:303px;top:148px;width:196px;border-top:1px dotted #555"></div>
<div class="b" style="left:321px;top:143px;width:11px;height:10px"><div class="ur" style="left:3px;top:1px;border-width:3px;border-right-width:0"></div></div>
<div class="a" style="left:303px;top:150px;width:32px;height:542px;background:#fff;border-right:2px solid #d4d0c8"></div>
<div class="a" style="left:336px;top:150px;height:544px;border-left:1px dotted #555"></div>
<div class="a" style="left:339px;top:152px;width:68px;height:59px;background:#d4d0c8;border:1px dashed #4a6aa5"></div>
<div class="a" style="left:345px;top:157px;font-size:11.5px;line-height:15px">Title</div>
<div class="a" style="left:345px;top:183px;font-size:11.5px;line-height:15px">KeyWords</div>
<div class="a" style="left:411px;top:152px;width:88px;height:29px;background:#d4d0c8;border:1px dashed #4a6aa5;border-right:0"></div>
<div class="a" style="left:411px;top:181px;width:88px;height:30px;background:#d4d0c8;border:1px dashed #4a6aa5;border-right:0"></div>
<div class="a" style="left:415px;top:155px;width:84px;height:19px;background:#fff;border:2px solid;border-color:#555 #fff #eee #555"></div>
<div class="a" style="left:415px;top:185px;width:84px;height:19px;background:#fff;border:2px solid;border-color:#555 #fff #eee #555"></div>
<div class="a" style="left:338px;top:214px;width:161px;height:355px;background:#fff"></div>
<div class="a" style="left:338px;top:569px;width:161px;height:4px;background:#d4d0c8"></div>
<div class="a" style="left:339px;top:573px;width:160px;height:121px;background:#858387;border-top:1px solid #000;border-bottom:1px solid #000;border-left:1px solid #000"></div>
<div class="a" style="left:303px;top:694px;width:196px;height:31px;background:#d4d0c8"></div>
<div class="a" style="left:303px;top:694px;width:196px;border-top:1px dotted #555"></div>
<div class="a" style="left:303px;top:696px;width:32px;height:27px;border-top:1px dashed #4a6aa5;border-right:1px dashed #4a6aa5;border-bottom:1px dashed #4a6aa5"></div>
<div class="a" style="left:339px;top:698px;width:160px;border-top:1px dashed #4a6aa5"></div>
<div class="a" style="left:339px;top:698px;height:27px;border-left:1px dashed #4a6aa5"></div>
<div class="b" style="left:342px;top:701px;width:76px;height:24px;font-size:11.5px;line-height:24px;text-align:center;border-bottom:0">SaveLocal</div>
<div class="b" style="left:423px;top:701px;width:76px;height:24px;font-size:11.5px;line-height:24px;text-align:center;border-bottom:0">SetFTP</div>
<div class="a" style="left:389px;top:717px;width:50px;height:8px;background:#d6dff5;border:1px solid #1a3070;border-bottom:0;border-radius:2px 2px 0 0;font:8px/8px 'Liberation Sans',sans-serif;text-align:center">⌃</div>
<div class="a" style="left:303px;top:725px;width:196px;height:2px;background:#404040"></div>
<div class="a" style="left:303px;top:727px;width:196px;height:59px;background:#fff"></div>
<div class="d" style="left:303px;top:786px;width:196px;height:16px"></div>
<div class="b" style="left:303px;top:786px;width:16px;height:16px"><div class="ul" style="left:4px;top:3px"></div></div>
<div class="b" style="left:380px;top:786px;width:37px;height:16px"></div>
<div class="b" style="left:483px;top:786px;width:16px;height:16px"><div class="ur" style="left:5px;top:3px"></div></div>
<svg class="ic" style="left:317px;top:825px"><rect x="5" y="2" width="10" height="8" fill="#cfe0f8" stroke="#4a6aa5"/><rect x="3" y="4" width="10" height="8" fill="#cfe0f8" stroke="#4a6aa5"/><rect x="1" y="6" width="10" height="8" fill="#e8eef8" stroke="#2a4a90"/><rect x="4" y="9" width="4" height="3" fill="#d8a020"/></svg>
<div class="a" style="left:335px;top:825px;font-size:10.6px;line-height:16px">ImageList1</div>
<svg class="ic" style="left:425px;top:825px"><rect x=".5" y=".5" width="12" height="12" fill="#fff" stroke="#777"/><path d="M2 2l6 5-2 1 2 4-2 1-2-4-2 2z" fill="#000"/><path d="M7 4h5M8 9h4" stroke="#4a6aa5"/></svg>
<div class="a" style="left:441px;top:825px;width:58px;overflow:hidden;font-size:10.8px;line-height:16px">ContextMenuStrip1</div>
<div class="d" style="left:303px;top:849px;width:196px;height:16px"></div>
<div class="b" style="left:303px;top:849px;width:16px;height:16px"><div class="ul" style="left:4px;top:3px"></div></div>
<div class="b" style="left:405px;top:849px;width:63px;height:16px"></div>
<div class="b" style="left:483px;top:849px;width:16px;height:16px"><div class="ur" style="left:5px;top:3px"></div></div>
<div class="a" style="left:300px;top:886px;width:204px;height:1px;background:#808080"></div>

<!-- CODE panel -->
<div class="a" style="left:503px;top:68px;width:572px;height:819px;border-left:1px solid #808080;border-right:1px solid #808080;border-bottom:1px solid #808080"></div>
<svg class="a" style="left:505px;top:70px" width="64" height="19"><path d="M1 18L14 2q1-1 2-1h44q2 0 2 2v15" fill="#fff" stroke="#808080"/></svg>
<div class="a" style="left:523px;top:71px;font-size:12px;line-height:16px">Main.vb</div>
<div class="a" style="left:568px;top:87px;width:505px;height:1px;background:#808080"></div>
<div class="ud" style="left:1040px;top:77px;border-width:4px;border-bottom-width:0"></div>
<div class="a" style="left:1055px;top:71px;font-size:14px;line-height:16px">✕</div>
<div class="a" style="left:505px;top:92px;width:280px;height:20px;background:#fff;border:1px solid;border-color:#404040 #fff #fff #404040;font-size:12px;font-weight:bold;line-height:18px;padding-left:19px">Main</div>
<svg class="ic" style="left:507px;top:94px"><use href="#cl"/></svg>
<div class="b" style="left:769px;top:93px;width:16px;height:18px"><div class="ud" style="left:3px;top:6px"></div></div>
<div class="a" style="left:791px;top:92px;width:281px;height:20px;background:#fff;border:1px solid;border-color:#404040 #fff #fff #404040;font-size:12px;font-weight:bold;line-height:18px;padding-left:20px">(Declarations)</div>
<svg class="ic" style="left:794px;top:94px"><rect x="1" y="3" width="4" height="12" fill="#4a8ac8"/><rect x="5" y="1" width="4" height="14" fill="#50b050"/><rect x="9" y="3" width="5" height="12" fill="#d8a020"/></svg>
<div class="b" style="left:1057px;top:93px;width:15px;height:18px"><div class="ud" style="left:3px;top:6px"></div></div>

<div class="w" style="left:504px;top:116px;width:554px;height:750px">
<div class="a" style="left:0;top:0;width:17px;height:750px;background:#d4d0c8"></div>
<div class="a" style="left:59px;top:0;width:3px;height:750px;background:#5ade5a"></div>
<div class="a" style="left:64px;top:0;width:1px;height:750px;background:#808080"></div>
<div class="a" style="left:0;top:0;width:554px">
<div class="l"><i>3</i><u></u><span class="c">Корневой каталог проекта</span></div>
<div class="l"><i>6</i><u></u><span><q>Private Sub</q> btOpen_Click ...</span></div>
<div class="l"><i>22</i></div>
<div class="l"><i>23</i><u></u><span class="c">Рекурсивная прога обхода каталога проекта</span></div>
<div class="l"><i>26</i><u></u><span><q>Private Sub</q> GetDir ...</span></div>
<div class="l"><i>35</i></div>
<div class="l"><i>36</i><u></u><span class="c">каждый узел на котором кликнули мышкой становится текущим и выделенным</span></div>
<div class="l"><i>39</i><u></u><span><q>Private Sub</q> T1_NodeMouseClick ...</span></div>
<div class="l"><i>48</i></div>
<div class="l"><i>49</i><u></u><span class="c">Вывели в браузер</span></div>
<div class="l"><i>52</i><u></u><span><q>Private Sub</q> T1_AfterSelect ...</span></div>
<div class="l"><i>55</i></div>
<div class="l"><i>56</i><u></u><span class="c">Проанализировали текст в браузере и заполнили тему, ключевые слова</span></div>
<div class="l"><i>59</i><u></u><span><q>Private Sub</q> W1_DocumentCompleted ...</span></div>
<div class="l"><i>86</i></div>
<div class="l"><i>87</i><div class="f"><q>Dim</q> DT <q>As New</q> DataTable</div></div>
<div class="l"><i>88</i><u></u><span class="c">Таблу для линков формируем динамически</span></div>
<div class="l"><i>91</i><u></u><span><q>Private Sub</q> Form1_Load ...</span></div>
<div class="l"><i>103</i></div>
<div class="l"><i>104</i><u></u><span class="c">Локальные ссылки проверяются бесхитростно</span></div>
<div class="l"><i>107</i><u></u><span><q>Private Sub</q> btCheckLocal_Click ...</span></div>
<div class="l"><i>119</i></div>
<div class="l"><i>120</i><u></u><span class="c">Проверка сетевых ссылок - каждая в своем потоке</span></div>
<div class="l"><i>123</i><u></u><span><q>Private Sub</q> btCheckInet_Click ...</span></div>
<div class="l"><i>147</i></div>
<div class="l"><i>148</i><u></u><span class="c">В этой структуре упакована вся информация об одном запущенном потоке</span></div>
<div class="l"><i>152</i><u></u><span><q>Friend Structure</q> OneProcess ...</span></div>
<div class="l"><i>162</i></div>
<div class="l"><i>163</i><u></u><span class="c">Этот класс выполняется в своем потоке - принимает запрос на проверку</span></div>
<div class="l"><i>167</i><u></u><span><q>Friend Class</q> CheckLink ...</span></div>
<div class="l"><i>185</i></div>
<div class="l"><i>186</i><u></u><span class="c">Сохранили локально на диск модифицированный текст</span></div>
<div class="l"><i>189</i><u></u><span><q>Private Sub</q> btSave_Click ...</span></div>
<div class="l"><i>205</i></div>
<div class="l"><i>206</i><u></u><span class="c">На редактирование файл вызывается во внешнем редакторе (пока блокнот)</span></div>
<div class="l"><i>209</i><u></u><span><q>Private Sub</q> cmEdit_Click ...</span></div>
<div class="l"><i>213</i></div>
<div class="l"><i>214</i><u></u><span class="c">Формирование файла robot.txt</span></div>
<div class="l"><i>217</i><u></u><span><q>Private Sub</q> cmNoRobot_Click ...</span></div>
<div class="l"><i>244</i></div>
<div class="l"><i>245</i><u></u><span class="c">Вызов формы ввода логина и пароля к FTP</span></div>
<div class="l"><i>248</i><u></u><span><q>Private Sub</q> btSetFTP_Click ...</span></div>
<div class="l"><i>252</i></div>
<div class="l"><i>253</i><u></u><span class="c">Асинхронный аплоад файла на FTP. Отметка (цветом) в дереве проекта делается</span></div>
</div></div>

<div class="d" style="left:1058px;top:116px;width:15px;height:750px"></div>
<div class="b" style="left:1058px;top:116px;width:15px;height:7px"></div>
<div class="b" style="left:1058px;top:124px;width:15px;height:15px"><div class="uu" style="left:3px;top:4px"></div></div>
<div class="b" style="left:1058px;top:153px;width:15px;height:313px"></div>
<div class="b" style="left:1058px;top:853px;width:15px;height:14px"><div class="ud" style="left:3px;top:4px"></div></div>
<div class="d" style="left:505px;top:868px;width:100px;height:16px"></div>
<div class="b" style="left:505px;top:868px;width:16px;height:16px"><div class="ul" style="left:4px;top:3px"></div></div>
<div class="b" style="left:530px;top:868px;width:100px;height:16px"></div>

<!-- RIGHT panels -->
<div class="a" style="left:1080px;top:68px;width:196px;height:174px;border-left:1px solid #808080;border-bottom:1px solid #808080;background:#fff"></div>
<div class="ti" style="left:1081px;top:68px;width:195px;height:16px">Solution Explorer - SiteChecker</div>
<div class="ud" style="left:1238px;top:75px;border-width:3px;border-bottom-width:0;border-top-color:#d4d0c8"></div>
<div class="a" style="left:1250px;top:69px;color:#d4d0c8;font-size:12px;line-height:15px">⊥</div>
<div class="a" style="left:1264px;top:69px;color:#d4d0c8;font-size:12px;line-height:15px">✕</div>
<div class="a" style="left:1081px;top:84px;width:195px;height:26px;background:linear-gradient(#f0efed,#e4e2de 70%,#d4d0c8);border-bottom:1px solid #808080"></div>
<div class="a" style="left:1085px;top:86px;width:23px;height:22px;background:#e8e6e2;border:1px solid #0a246a"></div>
<svg class="ic" style="left:1088px;top:89px"><path d="M2 2h7l3 3v10H2z" fill="#fff" stroke="#666"/><path d="M6 6h9v9H6z" fill="#f0d878" stroke="#806000"/></svg>
<svg class="ic" style="left:1111px;top:89px"><rect x="1" y="2" width="14" height="13" fill="#fff" stroke="#2a4a90"/><circle cx="8" cy="9" r="3.5" fill="none" stroke="#30a030" stroke-width="1.5"/><path d="M8 5v8M4 9h8" stroke="#d04040"/></svg>
<div class="sep" style="left:1133px;top:90px;height:14px"></div>
<svg class="ic" style="left:1141px;top:89px"><rect x=".5" y=".5" width="15" height="15" fill="#fff" stroke="#5a7ab8"/><path d="M3 4h8M5 7h6M3 10h8M5 13h6" stroke="#1a3fc0"/></svg>
<svg class="ic" style="left:1163px;top:89px"><use href="#fm"/></svg>
<svg class="ic" style="left:1186px;top:89px"><rect x="5" y="1" width="6" height="4" fill="#8ab0e0" stroke="#2a4a90"/><rect x="1" y="9" width="5" height="4" fill="#8ab0e0" stroke="#2a4a90"/><path d="M8 5v2H3v2" fill="none" stroke="#333"/><circle cx="11" cy="11" r="3" fill="#eee" stroke="#555"/></svg>

<div class="a" style="left:1092px;top:127px;height:96px;border-left:1px dotted #808080"></div>
<svg class="ic" style="left:1091px;top:112px;width:17px"><use href="#vb"/></svg>
<div class="a bb" style="left:1111px;top:111px">SiteChecker</div>
<div class="s" style="left:1088px;top:127px;width:188px"><u class="pl" style="left:0"></u><s style="left:5px"></s><svg style="left:22px"><use href="#fg"/></svg><span style="left:42px">My Project</span></div>
<div class="s" style="left:1088px;top:143px;width:188px"><u class="pl" style="left:0"></u><s style="left:5px"></s><svg style="left:22px"><use href="#fg"/></svg><span style="left:42px">References</span></div>
<div class="s" style="left:1088px;top:159px;width:188px"><u class="pl" style="left:0"></u><s style="left:5px"></s><svg style="left:22px"><use href="#fw"/></svg><span style="left:42px">bin</span></div>
<div class="s" style="left:1088px;top:175px;width:188px"><u class="pl" style="left:0"></u><s style="left:5px"></s><svg style="left:22px"><use href="#fw"/></svg><span style="left:42px">obj</span></div>
<div class="s" style="left:1088px;top:191px;width:188px"><s style="left:5px"></s><svg style="left:23px"><use href="#vb"/></svg><span style="left:42px">Crypt.vb</span></div>
<div class="s" style="left:1088px;top:207px;width:188px"><u class="pl" style="left:0"></u><s style="left:5px"></s><svg style="left:23px"><use href="#fm"/></svg><span style="left:42px">LoginFTP.vb</span></div>
<div class="s" style="left:1088px;top:223px;width:188px"><u class="pl" style="left:0"></u><s style="left:5px"></s><svg style="left:23px"><use href="#fm"/></svg><span style="left:42px">Main.vb</span></div>

<div class="a" style="left:1081px;top:247px;width:195px;height:15px;background:#0a246a;color:#fff;font-size:10.8px;line-height:15px;padding-left:4px">Class View</div>
<div class="ud" style="left:1238px;top:253px;border-width:3px;border-bottom-width:0;border-top-color:#fff"></div>
<div class="a" style="left:1250px;top:247px;color:#fff;font-size:12px;line-height:15px">⊥</div>
<div class="a" style="left:1264px;top:247px;color:#fff;font-size:12px;line-height:15px">✕</div>
<div class="a" style="left:1081px;top:262px;width:195px;height:27px;background:linear-gradient(#f0efed,#e4e2de 70%,#d4d0c8);border-bottom:1px solid #808080"></div>
<svg class="ic" style="left:1088px;top:267px"><path d="M1 5h5l1 2h8v8H1z" fill="#e8c060" stroke="#806000"/><path d="M11 1l1 2 2 1-2 1-1 2-1-2-2-1 2-1z" fill="#f0e040" stroke="#c0a000"/></svg>
<div class="sep" style="left:1110px;top:267px;height:16px"></div>
<svg class="ic" style="left:1116px;top:267px"><path d="M14 6v4H8v3L2 8l6-5v3z" fill="#3a70c8"/></svg>
<svg class="ic" style="left:1141px;top:267px"><path d="M2 6v4h6v3l6-5-6-5v3z" fill="#a8a6a0"/></svg>
<div class="sep" style="left:1162px;top:267px;height:16px"></div>
<svg class="ic" style="left:1170px;top:267px"><rect x="1" y="1" width="13" height="14" fill="#fff" stroke="#2a4a90"/><path d="M6 5h6M6 8h6M6 11h6" stroke="#333"/><path d="M2 5l1 1 2-3M2 9l1 1 2-3" stroke="#d03020" fill="none"/></svg>
<div class="ud" style="left:1190px;top:275px;border-width:3px;border-bottom-width:0"></div>
<div class="sep" style="left:1202px;top:267px;height:16px"></div>
<svg class="ic" style="left:1209px;top:267px"><rect x="5" y="1" width="6" height="4" fill="#8ab0e0" stroke="#2a4a90"/><rect x="1" y="9" width="5" height="4" fill="#8ab0e0" stroke="#2a4a90"/><path d="M8 5v2H3v2" fill="none" stroke="#333"/><circle cx="11" cy="11" r="3" fill="#eee" stroke="#555"/></svg>
<div class="a" style="left:1081px;top:289px;width:195px;height:27px;background:#e4e2de;border-bottom:1px solid #808080"></div>
<div class="a" style="left:1086px;top:293px;width:146px;height:18px;background:#fff;font-size:11px;line-height:16px;padding-left:4px">&lt;Search&gt;</div>
<div class="ud" style="left:1221px;top:301px;border-width:3px;border-bottom-width:0"></div>
<svg class="ic" style="left:1235px;top:293px"><rect x="0" y="1" width="15" height="14" fill="#40c850" stroke="#208030"/><path d="M3 6h4V3l6 5-6 5v-3H3z" fill="#fff"/></svg>
<svg class="ic" style="left:1258px;top:293px"><path d="M1 5h13M1 8h9M1 11h9" stroke="#aaa"/><path d="M8 6l6 8M14 6l-6 8" stroke="#999" stroke-width="1.5"/></svg>

<div class="a" style="left:1080px;top:316px;width:196px;height:222px;border-left:1px solid #808080;border-bottom:1px solid #808080;background:#fff;overflow:hidden"></div>
<div class="a" style="left:1097px;top:349px;height:136px;border-left:1px dotted #808080"></div>
<div class="a" style="left:1116px;top:397px;height:72px;border-left:1px dotted #808080"></div>
<svg class="a" style="left:1081px;top:317px" width="5" height="16"><rect x="-10" y="1" width="14" height="14" fill="#cfe0f8" stroke="#2a4a90"/></svg>
<div class="a bb" style="left:1090px;top:316px">SiteChecker</div>
<div class="s" style="left:1081px;top:332px;width:195px"><svg style="left:8px"><use href="#fd"/></svg><span style="left:28px">References</span></div>
<div class="s" style="left:1081px;top:348px;width:195px"><span style="left:12px;font-weight:bold;font-size:11px">{ }</span><span style="left:28px">SiteChecker</span></div>
<div class="s" style="left:1097px;top:364px;width:179px"><s style="left:0"></s><svg style="left:11px;width:18px"><use href="#cl"/></svg><span style="left:32px">Crypt</span></div>
<div class="s" style="left:1093px;top:380px;width:183px"><u class="mi" style="left:0"></u><s style="left:4px"></s><svg style="left:15px;width:18px"><use href="#cl"/></svg><span style="left:36px">LoginFTP</span></div>
<div class="s" style="left:1112px;top:396px;width:164px"><u class="pl" style="left:0"></u><s style="left:4px"></s><svg style="left:15px"><use href="#fd"/></svg><span style="left:36px">Base Types</span></div>
<div class="s" style="left:1093px;top:412px;width:183px"><u class="mi" style="left:0"></u><s style="left:4px"></s><svg style="left:15px;width:18px"><use href="#cl"/></svg><span style="left:36px">Main</span></div>
<div class="s" style="left:1112px;top:428px;width:164px"><u class="pl" style="left:0"></u><s style="left:4px"></s><svg style="left:15px"><use href="#fd"/></svg><span style="left:36px">Base Types</span></div>
<div class="s" style="left:1116px;top:444px;width:160px"><s style="left:0"></s><svg style="left:11px;width:18px"><use href="#cp2"/></svg><span style="left:32px">CheckLink</span></div>
<div class="s" style="left:1116px;top:460px;width:160px"><s style="left:0"></s><svg style="left:11px;width:18px"><use href="#cp2"/></svg><span style="left:32px">OneProcess</span></div>
<div class="s" style="left:1093px;top:476px;width:183px"><u class="pl" style="left:0"></u><s style="left:4px"></s><span style="left:18px;font-weight:bold;font-size:11px">{ }</span><span style="left:36px">My</span></div>
<div class="s" style="left:1097px;top:491px;width:179px;overflow:hidden"><s style="left:0"></s><svg style="left:11px;width:18px"><use href="#cp2"/></svg><div class="a" style="left:30px;top:0;width:150px;height:16px;background:#0a246a;border:1px dotted #ffc"></div><span style="left:31px;color:#fff">UploadFileToFTP_and_CheckTree</span></div>
<div class="d" style="left:1081px;top:520px;width:195px;height:16px"></div>
<div class="b" style="left:1081px;top:520px;width:16px;height:16px"><div class="ul" style="left:4px;top:3px"></div></div>
<div class="b" style="left:1115px;top:520px;width:120px;height:16px"></div>
<div class="b" style="left:1260px;top:520px;width:16px;height:16px"><div class="ur" style="left:5px;top:3px"></div></div>

<div class="a" style="left:1080px;top:541px;width:196px;height:321px;border-left:1px solid #808080;border-top:1px solid #808080;background:#fff"></div>
<div class="a" style="left:1089px;top:559px;height:152px;border-left:1px dotted #808080"></div>
<div class="a" style="left:1108px;top:559px;height:72px;border-left:1px dotted #808080"></div>
<div class="a" style="left:1108px;top:655px;height:40px;border-left:1px dotted #808080"></div>
<div class="a" style="left:1108px;top:719px;height:104px;border-left:1px dotted #808080"></div>
<div class="s" style="left:1085px;top:542px;width:191px"><u class="mi" style="left:0"></u><s style="left:4px"></s><svg style="left:15px"><use href="#fo"/></svg><span style="left:35px">Methods</span></div>
<div class="s" style="left:1108px;top:558px;width:168px"><s style="left:0"></s><svg style="left:12px"><use href="#me"/></svg><span style="left:31px">GO()</span></div>
<div class="s" style="left:1108px;top:574px;width:168px"><s style="left:0"></s><svg style="left:12px"><use href="#me"/></svg><span style="left:31px">ModifyWindowsFormErr()</span></div>
<div class="s" style="left:1108px;top:590px;width:168px"><s style="left:0"></s><svg style="left:12px"><use href="#me"/></svg><span style="left:31px">ModifyWindowsFormOK()</span></div>
<div class="s" style="left:1108px;top:606px;width:168px;overflow:hidden"><s style="left:0"></s><svg style="left:12px"><use href="#me"/></svg><span style="left:31px">New(System.Windows.Forms.Form)</span></div>
<div class="s" style="left:1108px;top:622px;width:168px;overflow:hidden"><s style="left:0"></s><svg style="left:12px"><use href="#me"/></svg><span style="left:31px">New(System.Windows.Forms.Form)</span></div>
<div class="s" style="left:1085px;top:638px;width:191px"><u class="mi" style="left:0"></u><s style="left:4px"></s><svg style="left:15px"><use href="#fo"/></svg><span style="left:35px">Properties</span></div>
<div class="s" style="left:1108px;top:654px;width:168px"><s style="left:0"></s><svg style="left:12px"><use href="#pr"/></svg><span style="left:31px">Message() As String</span></div>
<div class="s" style="left:1108px;top:670px;width:168px;overflow:hidden"><s style="left:0"></s><svg style="left:12px"><use href="#pr"/></svg><span style="left:31px">Request() As System.Net.FtpWebRequest</span></div>
<div class="s" style="left:1108px;top:686px;width:168px;overflow:hidden"><s style="left:0"></s><svg style="left:12px"><use href="#pr"/></svg><span style="left:31px">Response() As System.Net.FtpWebResponse</span></div>
<div class="s" style="left:1085px;top:702px;width:191px"><u class="mi" style="left:0"></u><s style="left:4px"></s><svg style="left:15px"><use href="#fo"/></svg><span style="left:35px">Variables</span></div>
<div class="s" style="left:1108px;top:718px;width:168px"><s style="left:0"></s><svg style="left:12px"><use href="#vr"/></svg><span style="left:31px">a_LocalFileName</span></div>
<div class="s" style="left:1108px;top:734px;width:168px"><s style="left:0"></s><svg style="left:12px"><use href="#vr"/></svg><span style="left:31px">a_LocalRoot</span></div>
<div class="s" style="left:1108px;top:750px;width:168px"><s style="left:0"></s><svg style="left:12px"><use href="#vr"/></svg><span style="left:31px">a_TreeNode</span></div>
<div class="s" style="left:1108px;top:766px;width:168px"><s style="left:0"></s><svg style="left:12px"><use href="#vr"/></svg><span style="left:31px">a_WinForm</span></div>
<div class="s" style="left:1108px;top:782px;width:168px"><s style="left:0"></s><svg style="left:12px"><use href="#vr"/></svg><span style="left:31px">ErrMessage</span></div>
<div class="s" style="left:1108px;top:798px;width:168px"><s style="left:0"></s><svg style="left:12px"><use href="#vr"/></svg><span style="left:31px">FTPRequest</span></div>
<div class="s" style="left:1108px;top:814px;width:168px"><s style="left:0"></s><svg style="left:12px"><use href="#vr"/></svg><span style="left:31px">FTPResponse</span></div>
<div class="d" style="left:1081px;top:846px;width:195px;height:16px"></div>
<div class="b" style="left:1081px;top:846px;width:16px;height:16px"><div class="ul" style="left:4px;top:3px"></div></div>
<div class="b" style="left:1096px;top:846px;width:69px;height:16px"></div>
<div class="b" style="left:1260px;top:846px;width:16px;height:16px"><div class="ur" style="left:5px;top:3px"></div></div>
<div class="a" style="left:1081px;top:862px;width:195px;height:1px;background:#fff"></div>
<div class="a" style="left:1081px;top:863px;width:195px;height:22px;background:linear-gradient(90deg,#fff 0,#fff 74px,#e4e2de 74px,#dcdad4)"></div>
<div class="a tab" style="left:1081px;top:863px;width:74px;height:22px;border-right:1px solid #808080;border-bottom:1px solid #808080;border-radius:0 0 4px 0;line-height:21px;padding-left:55px;overflow:hidden">iew</div>
<svg class="ic" style="left:1157px;top:866px"><use href="#pr"/></svg>
<div class="a tab" style="left:1174px;top:863px;line-height:21px;color:#404040">Properties</div>

<!-- OUTPUT -->
<div class="a" style="left:0;top:886px;width:1276px;height:5px;background:#e4e2de"></div>
<div class="ti" style="left:0;top:891px;width:1276px;height:16px">Output</div>
<div class="ud" style="left:1239px;top:898px;border-width:3px;border-bottom-width:0;border-top-color:#d4d0c8"></div>
<div class="a" style="left:1250px;top:891px;color:#d4d0c8;font-size:12px;line-height:16px">⊥</div>
<div class="a" style="left:1264px;top:891px;color:#d4d0c8;font-size:12px;line-height:16px">✕</div>
<div class="a" style="left:0;top:907px;width:1276px;height:4px;background:#f7f3f2"></div>

<!-- Tooltip -->
<div class="a" style="left:584px;top:866px;width:551px;height:43px;background:#ffffe1;border:1px solid #000"></div>
<div class="a" style="left:587px;top:869px;font-size:10.9px;line-height:13px;color:#000">''' &lt;summary&gt;</div>
<div class="a" style="left:597px;top:882px;font-size:10.9px;line-height:13px;color:#000">''' Асинхронный аплоад файла на FTP. Отметка (цветом) в дереве проекта делается по окончании сох...</div>
<div class="a" style="left:597px;top:895px;font-size:10.9px;line-height:13px;color:#000">''' &lt;/summary&gt;</div>
</body></html>
